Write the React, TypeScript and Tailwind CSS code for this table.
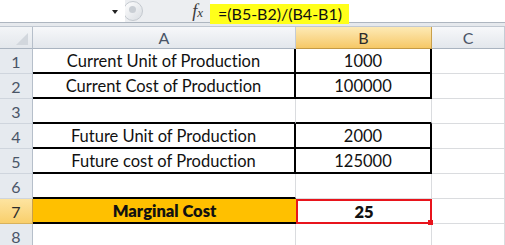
import React from 'react';

// Excel-like sheet: marginal cost example
const RowHead: React.FC<{ n: number; active?: boolean }> = ({ n, active }) => (
    <div
        className={`flex items-center justify-center border-r border-b pt-[2px] text-[16px] ${
            active
                ? 'bg-gradient-to-b from-[#fde4a0] to-[#f9cf6b] border-r-[#c9a04a] border-b-[#d8b25c] text-[#2b2b2b]'
                : 'bg-[#e6eaef] border-r-[#b6bfca] border-b-[#cfd5dd] text-[#4a5567]'
        }`}
    >
        {n}
    </div>
);

const ColHead: React.FC<{ label: string; active?: boolean }> = ({ label, active }) => (
    <div
        className={`flex items-center justify-center border-r border-b pt-[1px] text-[16px] ${
            active
                ? 'bg-gradient-to-b from-[#fdeab5] to-[#f6c865] border-r-[#c9a04a] border-b-[#c49a45] text-[#2b2b2b]'
                : 'bg-gradient-to-b from-[#f7f8fa] to-[#e3e7ec] border-r-[#c5ccd5] border-b-[#aab4c0] text-[#4a5567]'
        }`}
    >
        {label}
    </div>
);

const box = 'flex items-center justify-center pt-[2px] border-r-2 border-b-2 border-black text-[16.5px]';
const plain = 'border-r border-b border-[#dadcdf]';

export default function App() {
    return (
        <div className="w-[505px] h-[245px] overflow-hidden bg-white font-['Lato',sans-serif] text-[#111] [font-variant-ligatures:none]">
            {/* formula bar */}
            <div className="flex h-[23px] border-b border-[#aeb6c0]">
                <div className="relative w-[125px] bg-white">
                    <span className="absolute left-[112px] top-[10px] w-0 h-0 border-l-[3px] border-r-[3px] border-t-[4px] border-l-transparent border-r-transparent border-t-[#222]" />
                </div>
                <div className="relative flex w-[85px] items-center overflow-hidden bg-[#eceef1]">
                    <span className="absolute -left-[2px] top-[1px] h-[20px] w-[20px] rounded-full border border-[#c4c9cf] bg-gradient-to-br from-[#ffffff] to-[#d9dde2]" />
                    <span className="absolute left-[4px] top-[6px] h-[7px] w-[7px] rounded-full bg-[#c9ced4]" />
                    <span className="ml-auto mr-[7px] font-['Liberation_Serif',serif] italic text-[18px] text-[#3a3a3a] leading-none">
                        f<span className="text-[13px]">x</span>
                    </span>
                </div>
                <div className="flex-1 bg-white pt-[2px]">
                    <span className="inline-flex h-[20px] items-center bg-[#ffff1a] pl-[8px] pr-[7px] pt-[1px] text-[16px] text-[#111]">
                        =(B5-B2)/(B4-B1)
                    </span>
                </div>
            </div>
            <div className="h-[4px] bg-[#e6e9ed] border-b border-[#c1c8d1]" />

            {/* grid */}
            <div className="grid grid-cols-[33px_263px_136px_73px] grid-rows-[22px_repeat(8,25px)]">
                <div className="relative border-r border-b border-r-[#b6bfca] border-b-[#aab4c0] bg-gradient-to-b from-[#f3f5f7] to-[#e3e7ec]">
                    <span className="absolute right-[4px] bottom-[3px] w-0 h-0 [border-bottom:12px_solid_#d2d7dd] [border-left:12px_solid_transparent]" />
                </div>
                <ColHead label="A" />
                <ColHead label="B" active />
                <ColHead label="C" />

                {/* row 1 */}
                <RowHead n={1} />
                <div className={box}>Current Unit of Production</div>
                <div className={box}>1000</div>
                <div className={plain} />

                {/* row 2 */}
                <RowHead n={2} />
                <div className={box}>Current Cost of Production</div>
                <div className={box}>100000</div>
                <div className={plain} />

                {/* row 3 */}
                <RowHead n={3} />
                <div className="border-r border-r-[#dadcdf] border-b-2 border-b-black" />
                <div className="border-r border-r-[#dadcdf] border-b-2 border-b-black" />
                <div className={plain} />

                {/* row 4 */}
                <RowHead n={4} />
                <div className={box}>Future Unit of Production</div>
                <div className={box}>2000</div>
                <div className={plain} />

                {/* row 5 */}
                <RowHead n={5} />
                <div className={box}>Future cost of Production</div>
                <div className={box}>125000</div>
                <div className={plain} />

                {/* row 6 */}
                <RowHead n={6} />
                <div className="border-r border-r-[#dadcdf] border-b-2 border-b-black" />
                <div className={plain} />
                <div className={plain} />

                {/* row 7 */}
                <RowHead n={7} active />
                <div className="flex items-center justify-center pt-[2px] border-b-2 border-black bg-[#ffc000] text-[16.5px] font-extrabold">Marginal Cost</div>
                <div className="relative flex items-center justify-center pt-[2px] border-2 border-[#e8141c] text-[16.5px] font-extrabold">
                    25
                    <span className="absolute -right-[3px] -bottom-[3px] h-[5px] w-[5px] bg-[#e8141c]" />
                </div>
                <div className={plain} />

                {/* row 8 */}
                <RowHead n={8} />
                <div className={plain} />
                <div className={plain} />
                <div className={plain} />
            </div>
        </div>
    );
}
